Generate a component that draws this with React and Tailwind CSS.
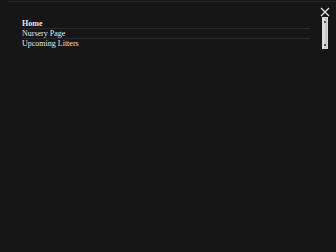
import React from "react";

const links = [
  { label: "Home", bold: true },
  { label: "Nursery Page" },
  { label: "Upcoming Litters" },
];

export default function App() {
  return (
    <div className="w-[336px] h-[252px] bg-[#161616] overflow-hidden" style={{ fontFamily: '"Liberation Serif", serif' }}>
      <div className="h-[3px] mt-[1px] ml-[8px] border-t border-[#262626]" />
      <div className="flex pt-[15px] pl-[22px] pr-[6px]">
        <ul className="flex-1 pr-[10px]">
          {links.map((l, i) => (
            <li
              key={l.label}
              className={`h-[10px] text-[8px] leading-[10px] text-[#e8e8e8] ${i < links.length - 1 ? "border-b border-[#2a2a2a]" : ""} ${l.bold ? "font-bold" : ""}`}
            >
              {l.label}
            </li>
          ))}
        </ul>
        <div className="flex flex-col items-center w-[10px] -mt-[12px]">
          <svg width="10" height="10" viewBox="0 0 10 10" className="shrink-0">
            <path d="M1 1 L9 9 M9 1 L1 9" stroke="#e0e0e0" strokeWidth="1.3" />
          </svg>
          <div className="relative w-[6px] h-[32px] border border-[#d8d8d8] bg-gradient-to-r from-[#e6e6e6] to-[#bdbdbd]">
            <div className="absolute left-[1px] top-[3px] w-[2px] h-[2px] bg-[#555]" />
            <div className="absolute left-[1px] bottom-[2px] w-[2px] h-[2px] bg-[#555]" />
          </div>
        </div>
      </div>
    </div>
  );
}
